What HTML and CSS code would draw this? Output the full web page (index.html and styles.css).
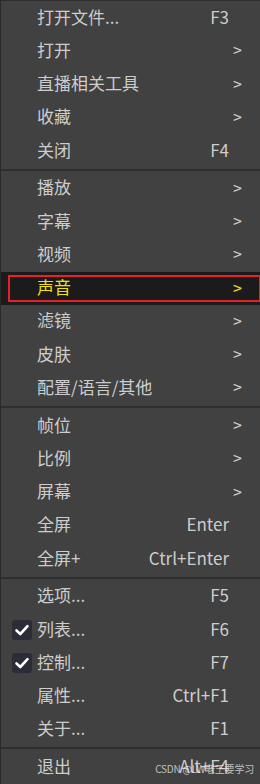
FILE: index.html
```html
<!DOCTYPE html>
<html lang="zh-CN">
<head>
    <meta charset="UTF-8">
    <meta name="viewport" content="width=device-width, initial-scale=1.0">
    <title>菜单</title>
    <link rel="stylesheet" href="styles.css">
</head>
<body>
    <div class="menu">
        <div class="item"><span class="check"></span><span class="label">打开文件...</span><span class="key">F3</span><span class="arrow"></span></div>
        <div class="item"><span class="check"></span><span class="label">打开</span><span class="key"></span><span class="arrow">&gt;</span></div>
        <div class="item"><span class="check"></span><span class="label">直播相关工具</span><span class="key"></span><span class="arrow">&gt;</span></div>
        <div class="item"><span class="check"></span><span class="label">收藏</span><span class="key"></span><span class="arrow">&gt;</span></div>
        <div class="item"><span class="check"></span><span class="label">关闭</span><span class="key">F4</span><span class="arrow"></span></div>
        <div class="sep"></div>
        <div class="item"><span class="check"></span><span class="label">播放</span><span class="key"></span><span class="arrow">&gt;</span></div>
        <div class="item"><span class="check"></span><span class="label">字幕</span><span class="key"></span><span class="arrow">&gt;</span></div>
        <div class="item"><span class="check"></span><span class="label">视频</span><span class="key"></span><span class="arrow">&gt;</span></div>
        <div class="item active"><span class="check"></span><span class="label">声音</span><span class="key"></span><span class="arrow">&gt;</span></div>
        <div class="item"><span class="check"></span><span class="label">滤镜</span><span class="key"></span><span class="arrow">&gt;</span></div>
        <div class="item"><span class="check"></span><span class="label">皮肤</span><span class="key"></span><span class="arrow">&gt;</span></div>
        <div class="item"><span class="check"></span><span class="label">配置/语言/其他</span><span class="key"></span><span class="arrow">&gt;</span></div>
        <div class="sep"></div>
        <div class="item"><span class="check"></span><span class="label">帧位</span><span class="key"></span><span class="arrow">&gt;</span></div>
        <div class="item"><span class="check"></span><span class="label">比例</span><span class="key"></span><span class="arrow">&gt;</span></div>
        <div class="item"><span class="check"></span><span class="label">屏幕</span><span class="key"></span><span class="arrow">&gt;</span></div>
        <div class="item"><span class="check"></span><span class="label">全屏</span><span class="key">Enter</span><span class="arrow"></span></div>
        <div class="item"><span class="check"></span><span class="label">全屏+</span><span class="key">Ctrl+Enter</span><span class="arrow"></span></div>
        <div class="sep"></div>
        <div class="item"><span class="check"></span><span class="label">选项...</span><span class="key">F5</span><span class="arrow"></span></div>
        <div class="item"><span class="check on"><svg viewBox="0 0 20 20" width="20" height="20"><path d="M4.5 10.5 L8.3 14 L15.5 6.2" fill="none" stroke="#fff" stroke-width="2.6" stroke-linecap="round" stroke-linejoin="round"/></svg></span><span class="label">列表...</span><span class="key">F6</span><span class="arrow"></span></div>
        <div class="item"><span class="check on"><svg viewBox="0 0 20 20" width="20" height="20"><path d="M4.5 10.5 L8.3 14 L15.5 6.2" fill="none" stroke="#fff" stroke-width="2.6" stroke-linecap="round" stroke-linejoin="round"/></svg></span><span class="label">控制...</span><span class="key">F7</span><span class="arrow"></span></div>
        <div class="item"><span class="check"></span><span class="label">属性...</span><span class="key">Ctrl+F1</span><span class="arrow"></span></div>
        <div class="item"><span class="check"></span><span class="label">关于...</span><span class="key">F1</span><span class="arrow"></span></div>
        <div class="sep"></div>
        <div class="item"><span class="check"></span><span class="label">退出</span><span class="key">Alt+F4</span><span class="arrow"></span></div>
        <div class="watermark">CSDN @LW老王要学习</div>
    </div>
</body>
</html>
```

FILE: styles.css
```css
body{
    margin: 0;
    background-color: #414141;
    font-family: "Noto Sans CJK SC", "Noto Sans", sans-serif;
}
.menu{
    position: relative;
    width: 260px;
    height: 784px;
    overflow: hidden;
    box-sizing: border-box;
    background-color: #414141;
    border-left: 1px solid #2a2a2a;
    border-top: 1px solid #2f2f2f;
    color: #cdcdcd;
    font-size: 17px;
}
.item{
    position: relative;
    display: grid;
    grid-template-columns: 36px 1fr auto 31px;
    align-items: center;
    box-sizing: border-box;
    height: 33.25px;
    padding-bottom: 3px;
    line-height: 1;
}
.check{
    display: flex;
    justify-content: flex-end;
    padding-right: 5px;
}
.check.on svg{
    display: block;
    margin-top: 3px;
    background-color: #2c2c36;
    border-radius: 3px;
}
.label{
    white-space: nowrap;
}
.key{
    text-align: right;
    white-space: nowrap;
}
.arrow{
    text-align: right;
    padding-right: 18px;
    font-size: 16px;
}
.active{
    background-color: #1b1b1b;
    color: #f2e20a;
}
.active::after{
    content: "";
    position: absolute;
    left: 7px;
    right: -1px;
    top: 3px;
    bottom: 3px;
    border: 2px solid #e8202a;
}
.sep{
    height: 4.5px;
    display: flex;
    align-items: center;
}
.sep::before{
    content: "";
    flex: 1;
    height: 2px;
    background-color: #2f2f2f;
}
.watermark{
    position: absolute;
    right: 6px;
    bottom: 8px;
    font-size: 10px;
    letter-spacing: -0.2px;
    color: rgba(235, 235, 235, 0.75);
    font-family: "Noto Sans CJK SC", sans-serif;
}
```
